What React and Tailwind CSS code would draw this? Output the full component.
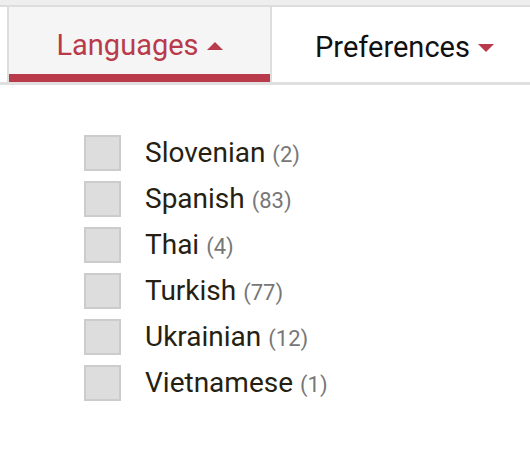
const languages = [
  { name: "Slovenian", count: 2 },
  { name: "Spanish", count: 83 },
  { name: "Thai", count: 4 },
  { name: "Turkish", count: 77 },
  { name: "Ukrainian", count: 12 },
  { name: "Vietnamese", count: 1 },
];

const Caret = ({ up }) => (
  <svg width="16" height="8" viewBox="0 0 16 8" className="ml-[8px]">
    <polygon points={up ? "0,8 8,0 16,8" : "0,0 16,0 8,8"} fill="#b93a4a" />
  </svg>
);

const App = () => {
  return (
    <div
      className="w-[530px] h-[476px] overflow-hidden bg-white"
      style={{ fontFamily: "Roboto, 'Liberation Sans', sans-serif" }}
    >
      <div className="h-[7px] bg-[#eeeeee] border-b-2 border-[#dddddd]" />

      <div className="flex pl-[7px] border-b-[3px] border-[#e0e0e0]">
        <button className="w-[265px] shrink-0 flex flex-col bg-[#f5f5f5] border-x-2 border-[#dddddd]">
          <div className="h-[67px] flex items-center justify-center pt-[10px] text-[29px] text-[#b93a4a]">
            Languages
            <Caret up />
          </div>
          <div className="h-[8px] bg-[#b93a4a]" />
        </button>
        <button className="w-[265px] shrink-0 flex items-center justify-center pt-[10px] pb-[3px] text-[29px] text-[#111111]">
          Preferences
          <Caret />
        </button>
      </div>

      <ul className="pl-[84px] pt-[50px] flex flex-col gap-[10px]">
        {languages.map((l) => (
          <li key={l.name} className="flex items-center h-[36px]">
            <span className="w-[37px] h-[36px] bg-[#dddddd] border-2 border-[#cccccc]" />
            <span className="ml-[24px] text-[28px] text-[#261f12]">
              {l.name} <span className="text-[22px] text-[#777777]">({l.count})</span>
            </span>
          </li>
        ))}
      </ul>
    </div>
  );
};

export default App;
